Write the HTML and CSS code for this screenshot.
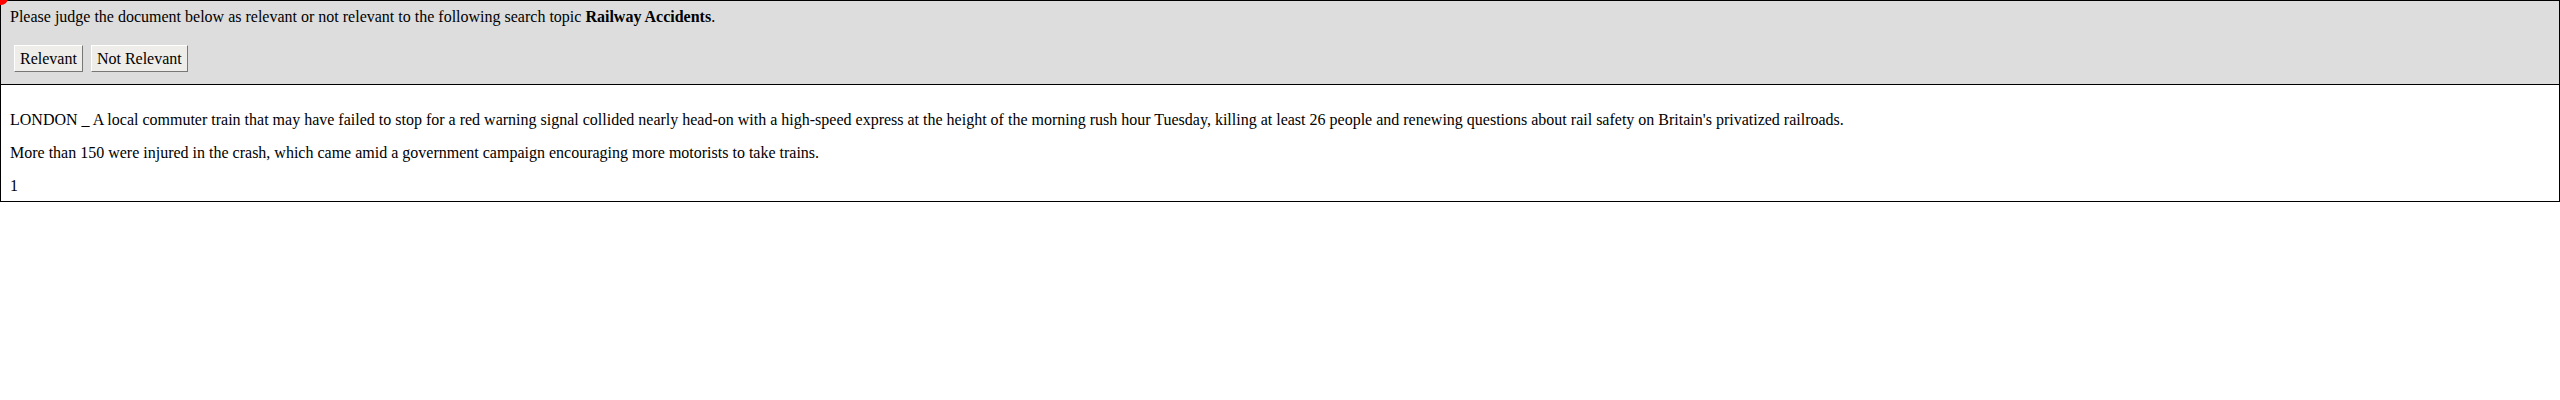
FILE: index.html
```html
<!DOCTYPE html>
<html>
<head>
<meta charset="utf-8">
<link rel="stylesheet" href="styles.css">
</head>
<body>
<span class="dot"></span>
<div class="judge">
  <div class="prompt">Please judge the document below as relevant or not relevant to the following search topic <b>Railway Accidents</b>.</div>
  <div class="buttons">
    <button class="btn">Relevant</button>
    <button class="btn">Not Relevant</button>
  </div>
</div>
<div class="doc">
  <p>LONDON _ A local commuter train that may have failed to stop for a red warning signal collided nearly head-on with a high-speed express at the height of the morning rush hour Tuesday, killing at least 26 people and renewing questions about rail safety on Britain's privatized railroads.</p>
  <p>More than 150 were injured in the crash, which came amid a government campaign encouraging more motorists to take trains.</p>
  <p>1</p>
</div>
</body>
</html>
```
FILE: styles.css
```css
html, body {
  margin: 0;
  padding: 0;
  background: #fff;
}
body {
  font-family: "Liberation Serif", "Times New Roman", serif;
  font-size: 16px;
  color: #000;
  position: relative;
}
.dot {
  position: absolute;
  left: -6px;
  top: -9px;
  width: 14px;
  height: 14px;
  border-radius: 50%;
  background: #f00;
}
.judge {
  background: #dddddd;
  border: 1px solid #000;
  padding: 7px 9px 12px 9px;
}
.prompt {
  line-height: 18px;
}
.buttons {
  display: flex;
  gap: 8px;
  margin-top: 19px;
  padding-left: 4px;
}
.btn {
  font-family: "Liberation Serif", "Times New Roman", serif;
  font-size: 16px;
  color: #000;
  background: #efedea;
  border: 1px solid;
  border-color: #fff #777 #777 #fff;
  padding: 3px 5px;
  height: 27px;
  margin: 0;
}
.doc {
  border: 1px solid #000;
  border-top: none;
  padding: 10px 9px 0 9px;
}
.doc p {
  margin: 16px 0;
  line-height: 17px;
}
.doc p:last-child {
  margin-bottom: 7px;
}
```
